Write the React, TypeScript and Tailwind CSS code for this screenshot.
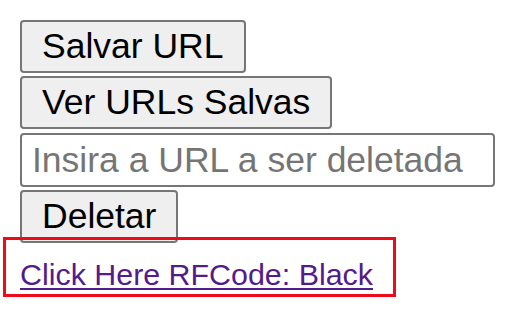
export default function App() {
  return (
    <div className="flex flex-col items-start gap-[3px] p-[20px] bg-white min-h-[320px]" style={{ fontFamily: '"Liberation Sans", Arial, sans-serif' }}>
      <button className="h-[53px] px-5 border-2 border-[#767676] rounded-[4px] bg-[#efefef] text-[35.5px] leading-none text-black">Salvar URL</button>
      <button className="h-[53px] px-5 border-2 border-[#767676] rounded-[4px] bg-[#efefef] text-[35.5px] leading-none text-black">Ver URLs Salvas</button>
      <input
        className="mt-[1px] h-[54px] w-[475px] px-[10px] border-2 border-[#767676] rounded-[4px] bg-white text-[35.5px] text-black placeholder:text-[#757575] outline-none"
        placeholder="Insira a URL a ser deletada"
      />
      <button className="h-[53px] px-5 border-2 border-[#767676] rounded-[4px] bg-[#efefef] text-[35.5px] leading-none text-black">Deletar</button>
      <div className="-mt-[9px] -ml-[17px] w-[393px] h-[60px] border-[3px] border-[#ee0a17] pl-[14px] pt-[12px]">
        <a href="#" className="text-[30.4px] text-[#551a8b] underline decoration-[2px] underline-offset-[3px]">Click Here RFCode: Black</a>
      </div>
    </div>
  );
}
